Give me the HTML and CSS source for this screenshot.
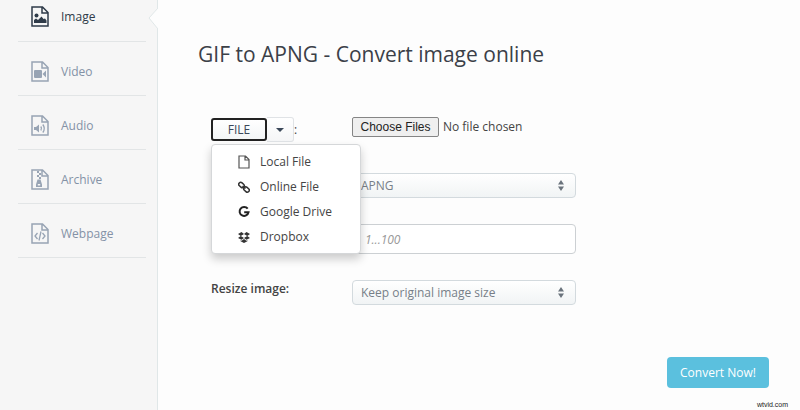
FILE: index.html
```html
<!DOCTYPE html>
<html lang="en">
<head>
  <meta charset="UTF-8" />
  <meta name="viewport" content="width=device-width, initial-scale=1.0"/>
  <title>GIF to APNG - Convert image online</title>
  <link rel="stylesheet" href="styles.css">
</head>
<body>

  <div class="page">
    <nav class="sidebar">
      <a class="active" href="#image">
        <svg class="icon" viewBox="0 0 18 21"><path class="line" d="M1 1h10.500l5.500 5.500V20H1z M11 1v6h6"/><circle cx="5.500" cy="9.500" r="2"/><path d="M3 17v-3l2-1.500 2 1.500 3.500-3.500 2 2.500 1.500-.5 1.500 2V17z"/></svg>
        <span>Image</span>
      </a>
      <a href="#video">
        <svg class="icon" viewBox="0 0 18 21"><path class="line" d="M1 1h10.500l5.500 5.500V20H1z M11 1v6h6"/><rect x="3" y="9" width="8" height="8" rx="1"/><path d="M11.500 13l3.500-3.500v7z"/></svg>
        <span>Video</span>
      </a>
      <a href="#audio">
        <svg class="icon" viewBox="0 0 18 21"><path class="line" d="M1 1h10.500l5.500 5.500V20H1z M11 1v6h6"/><path d="M3 12h2l3-2.500v8L5 15H3z"/><path class="thin" d="M9.800 11.500q1.500 2 0 4M11.800 9.500q3 4 0 8"/></svg>
        <span>Audio</span>
      </a>
      <a href="#archive">
        <svg class="icon" viewBox="0 0 18 21"><path class="line" d="M1 1h10.500l5.500 5.500V20H1z M11 1v6h6"/><path d="M6 2h2v2H6zM8 4h2v2H8zM6 6h2v2H6zM8 8h2v2H8zM6.500 10.500h3l1.500 5V18H5v-2.500zM6.800 15v1.600h2.400V15z" fill-rule="evenodd"/></svg>
        <span>Archive</span>
      </a>
      <a href="#webpage">
        <svg class="icon" viewBox="0 0 18 21"><path class="line" d="M1 1h10.500l5.500 5.500V20H1z M11 1v6h6"/><path class="thin" d="M6.500 10L4 13l2.500 3M11.500 10l2.500 3-2.500 3M10 8.500L8 17.500"/></svg>
        <span>Webpage</span>
      </a>
      <svg class="pointer" viewBox="0 0 10 22"><path d="M10 0L1 10l9 11"/></svg>
    </nav>

    <main>
      <h1>GIF to APNG - Convert image online</h1>

      <form class="convert-form">
        <div class="row">
          <div class="source">
            <button type="button" class="file-btn">FILE</button>
            <button type="button" class="caret-btn" aria-label="Choose source">
              <svg viewBox="0 0 8 4"><path d="M0 0h8L4 4z"/></svg>
            </button>
            <span>:</span>
            <ul class="menu">
              <li><a href="#local">
                <svg viewBox="0 0 12 14"><path class="thin" d="M1 1h6.500l3.500 3.500V13H1zM7 1v4h4"/></svg>
                <span>Local File</span>
              </a></li>
              <li><a href="#online">
                <svg viewBox="0 0 12 14"><g class="chain"><rect x="0.500" y="3" width="6" height="4" rx="2" transform="rotate(42 3.500 5)"/><rect x="5.500" y="7.500" width="6" height="4" rx="2" transform="rotate(42 8.500 9.500)"/><path d="M4.500 6l3 2.500"/></g></svg>
                <span>Online File</span>
              </a></li>
              <li><a href="#drive">
                <svg viewBox="0 0 12 14"><path class="google" d="M9.700 3.700A4.500 4.500 0 1 0 10.500 7.300H6.200"/></svg>
                <span>Google Drive</span>
              </a></li>
              <li><a href="#dropbox">
                <svg viewBox="0 0 12 14"><path d="M3.500 2L6 4 2.800 6 0 4zM8.500 2L6 4l3.200 2L12 4zM0 8l2.800-2L6 8 3.500 9.800zM12 8L9.200 6 6 8l2.500 1.800zM2.600 10.200l1 .6L6 9l2.400 1.800 1-.6v1L6 13l-3.400-1.800z"/></svg>
                <span>Dropbox</span>
              </a></li>
            </ul>
          </div>
          <input type="file" class="upload" aria-label="File" multiple>
        </div>

        <div class="row">
          <div class="select-wrap">
            <select aria-label="Convert to">
              <option>APNG</option>
              <option>GIF</option>
            </select>
            <svg class="arrows" viewBox="0 0 6 11"><path d="M0 4.500h6L3 0zM0 6.500h6L3 11z"/></svg>
          </div>
        </div>

        <div class="row">
          <input type="text" class="quality" aria-label="Quality" placeholder="1...100">
        </div>

        <div class="row">
          <label for="resize">Resize image:</label>
          <div class="select-wrap">
            <select id="resize">
              <option>Keep original image size</option>
            </select>
            <svg class="arrows" viewBox="0 0 6 11"><path d="M0 4.500h6L3 0zM0 6.500h6L3 11z"/></svg>
          </div>
        </div>

        <button type="submit" class="convert-btn">Convert Now!</button>
      </form>

      <footer>wtvid.com</footer>
    </main>
  </div>

</body>
</html>
```

FILE: styles.css
```css
* {
  box-sizing: border-box;
}

body {
  margin: 0;
  background-color: #fdfdfd;
  color: #444;
  font-family: "Open Sans", sans-serif;
  font-size: 12px;
}

button, input, select {
  font-family: inherit;
  font-size: 12px;
}

.page {
  display: flex;
  min-height: 100vh;
}

/* Sidebar */
.sidebar {
  position: relative;
  width: 158px;
  flex-shrink: 0;
  padding: 0 11px 0 18px;
  background-color: #f6f6f6;
  border-right: 1px solid #e0e7e8;
}

.sidebar a {
  display: flex;
  align-items: center;
  gap: 12px;
  height: 54px;
  padding: 6px 0 0 13px;
  border-bottom: 1px solid #e2e5e6;
  color: #8492a6;
  text-decoration: none;
}

.sidebar a.active {
  height: 42px;
  padding-bottom: 14px;
  color: #2f3b49;
  font-weight: 500;
}

.icon {
  width: 18px;
  height: 21px;
  fill: #98a4b4;
  stroke: #98a4b4;
  stroke-width: 0;
}

.active .icon {
  fill: #2f3b49;
  stroke: #2f3b49;
}

.icon .line {
  fill: none;
  stroke-width: 1.5px;
}

.thin {
  fill: none;
  stroke-width: 1.2px;
}

.icon .thin {
  stroke-width: 1.3px;
}

.pointer {
  position: absolute;
  top: 8px;
  right: -1px;
  width: 10px;
  height: 22px;
  fill: #fdfdfd;
  stroke: #e0e7e8;
}

/* Content */
main {
  display: flex;
  flex-direction: column;
  flex: 1;
  padding: 40px 12px 0 40px;
}

h1 {
  margin: 0;
  color: #3b4048;
  font-size: 21px;
  font-weight: 400;
  line-height: 28px;
}

.convert-form {
  display: flex;
  flex-direction: column;
  padding: 49px 19px 0 13px;
}

.row {
  display: grid;
  grid-template-columns: 141px 224px;
  align-items: start;
  margin-bottom: 26px;
}

.row > .select-wrap,
.row > .quality,
.row > .upload {
  grid-column: 2;
}

.row:first-child {
  min-height: 30px;
}

.source {
  position: relative;
  display: flex;
  align-items: center;
  height: 25px;
}

.file-btn {
  width: 56px;
  height: 23px;
  padding: 0;
  background: linear-gradient(#fff, #f3f5f6);
  border: 2px solid #222;
  border-radius: 3px;
  color: #3b4859;
  font-weight: 500;
  line-height: 18px;
}

.caret-btn {
  display: flex;
  align-items: center;
  justify-content: center;
  width: 27px;
  height: 25px;
  padding: 0;
  background: linear-gradient(#fff, #f5f6f7);
  border: 1px solid #e0e3e6;
  border-left: none;
  border-radius: 0 3px 3px 0;
}

.caret-btn svg {
  width: 8px;
  height: 4px;
  fill: #3b4859;
}

.menu {
  position: absolute;
  z-index: 1;
  top: 27px;
  left: 0;
  width: 150px;
  margin: 0;
  padding: 4px 0;
  background-color: #fff;
  border: 1px solid #d5d7d9;
  border-radius: 4px;
  box-shadow: 0 5px 10px rgba(0, 0, 0, 0.2);
  list-style: none;
}

.menu a {
  display: flex;
  align-items: center;
  gap: 10px;
  height: 25px;
  padding-left: 26px;
  color: #444;
  text-decoration: none;
}

.menu svg {
  width: 12px;
  height: 14px;
  fill: #333;
  stroke: none;
}

.menu .thin {
  fill: none;
  stroke: #555;
}

.menu .chain {
  fill: none;
  stroke: #333;
  stroke-width: 1.5px;
}

.menu .google {
  fill: none;
  stroke: #222;
  stroke-width: 2px;
}

.upload {
  width: 224px;
  color: #444;
}

.upload::file-selector-button {
  width: 87px;
  height: 20px;
  margin: 0 4px 0 0;
  padding: 0;
  background-color: #efefef;
  border: 1px solid #858585;
  border-radius: 2px;
  color: #222;
  font-family: "Liberation Sans", sans-serif;
  font-size: 12px;
}

.select-wrap {
  position: relative;
}

select {
  display: block;
  width: 100%;
  height: 25px;
  padding: 0 8px;
  appearance: none;
  background: linear-gradient(#fff, #f1f4f5);
  border: 1px solid #d3dade;
  border-radius: 4px;
  color: #777f88;
}

.arrows {
  position: absolute;
  top: 7px;
  right: 12px;
  width: 6px;
  height: 11px;
  fill: #6a737c;
  pointer-events: none;
}

.quality {
  height: 30px;
  padding: 0 12px;
  background-color: #fff;
  border: 1px solid #ccd0d3;
  border-radius: 4px;
}

.quality::placeholder {
  color: #999;
  font-style: italic;
}

label {
  font-weight: 600;
}

.convert-btn {
  align-self: flex-end;
  width: 102px;
  height: 31px;
  margin-top: 26px;
  padding: 0;
  background-color: #5bc0de;
  border: none;
  border-radius: 4px;
  color: #fff;
}

footer {
  margin-top: auto;
  color: #222;
  font-family: "Liberation Sans", sans-serif;
  font-size: 7px;
  line-height: 10px;
  text-align: right;
}
```
